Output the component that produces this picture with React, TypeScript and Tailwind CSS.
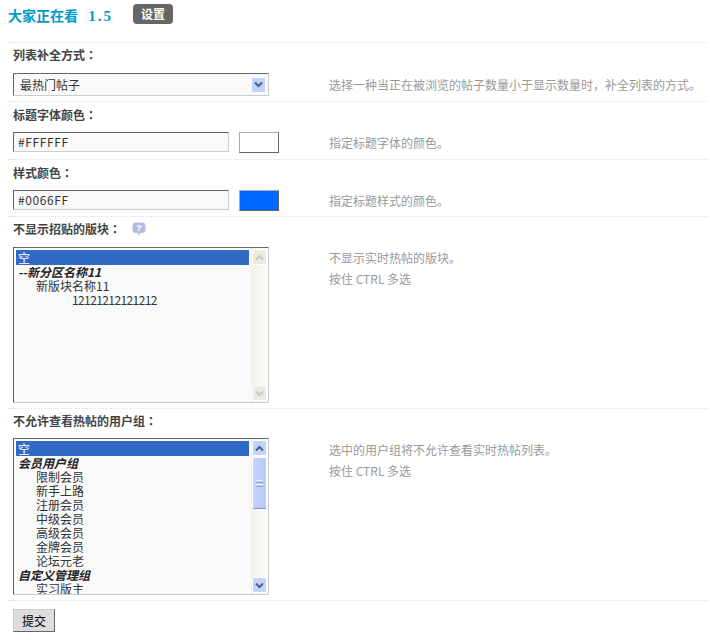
import type { ReactNode } from 'react';

const font = 'font-["Noto_Sans_CJK_SC","Noto_Sans",sans-serif]';

// the reference's colon sits in the middle of its cell, as in the TC cut
function Colon() {
    return <span className='font-["Noto_Sans_CJK_TC",sans-serif]'>：</span>;
}

function Chevron({ up, color }: { up?: boolean; color: string }) {
    return (
        <svg width="9" height="7" viewBox="0 0 9 7" fill="none">
            <path d={up ? 'M1 5.5 L4.5 2 L8 5.5' : 'M1 1.5 L4.5 5 L8 1.5'} stroke={color} strokeWidth="2" />
        </svg>
    );
}

function ArrowBtn({ up, active }: { up?: boolean; active: boolean }) {
    return (
        <div
            className={
                active
                    ? 'flex h-[16px] w-[15px] shrink-0 items-center justify-center rounded-[2px] border border-white bg-[#c1d2fb]'
                    : 'flex h-[16px] w-[15px] shrink-0 items-center justify-center rounded-[2px] border border-white bg-[#ecebe1]'
            }
        >
            <Chevron up={up} color={active ? '#4d6185' : '#c9c8bd'} />
        </div>
    );
}

function Scrollbar({ active }: { active: boolean }) {
    return (
        <div className="flex w-[17px] shrink-0 flex-col items-center bg-gradient-to-r from-[#f1f0e8] to-[#fdfdfa] pt-px pb-px">
            <ArrowBtn up active={active} />
            {active && (
                <div className="mt-px flex h-[52px] w-[15px] flex-col items-center justify-center gap-px rounded-[2px] border border-white border-b-[#7f9db9] bg-gradient-to-r from-[#c4d5fc] to-[#b6c9f8]">
                    <div className="h-px w-[7px] bg-[#eef3ff]" />
                    <div className="h-px w-[7px] bg-[#8fa8e0]" />
                    <div className="h-px w-[7px] bg-[#eef3ff]" />
                    <div className="h-px w-[7px] bg-[#8fa8e0]" />
                </div>
            )}
            <div className="flex-1" />
            <ArrowBtn active={active} />
        </div>
    );
}

function Listbox({ children, active, height }: { children: ReactNode; active: boolean; height: string }) {
    return (
        <div className={`flex w-[256px] overflow-hidden border border-t-[#666666] border-l-[#666666] border-r-[#cccccc] border-b-[#cccccc] bg-[#f9f9f9] ${height}`}>
            <div className="min-w-0 flex-1 overflow-hidden pt-[2px] pl-[2px] text-[12px] leading-[14px] text-[#333333]">
                <div className="mr-[2px] h-[15px] bg-[#316ac5] pl-[2px] leading-[15px] text-white">空</div>
                {children}
            </div>
            <Scrollbar active={active} />
        </div>
    );
}

function Group({ children }: { children: ReactNode }) {
    return <div className="pl-[2px] font-bold italic text-[#222222]">{children}</div>;
}

function Row({ label, hint, control, rowClass, gapClass, hintClass }: {
    label: ReactNode;
    hint: ReactNode;
    control: ReactNode;
    rowClass: string;
    gapClass: string;
    hintClass: string;
}) {
    return (
        <div className={`border-b border-dotted border-[#c4e6fb] px-[5px] ${rowClass}`}>
            <div className="flex h-[16px] items-center text-[12px] font-bold text-[#444444]">{label}</div>
            <div className={`flex ${gapClass}`}>
                <div className="w-[316px] shrink-0">{control}</div>
                <div className={`text-[12px] leading-[21px] text-[#999999] ${hintClass}`}>{hint}</div>
            </div>
        </div>
    );
}

function ColorInput({ value, swatch }: { value: string; swatch: string }) {
    return (
        <div className="flex items-start">
            <div className="flex h-[20px] w-[216px] items-center border border-t-[#666666] border-l-[#666666] border-r-[#cccccc] border-b-[#cccccc] bg-[#f9f9f9] pl-[4px] text-[12px] tracking-[0.6px] text-[#333333]">
                {value}
            </div>
            <div className={`ml-[10px] h-[21px] w-[40px] border border-t-[#aaaaaa] border-l-[#aaaaaa] border-r-[#666666] border-b-[#666666] ${swatch}`} />
        </div>
    );
}

export default function App() {
    return (
        <div className={`h-[640px] w-[710px] overflow-hidden bg-white pr-[2px] pl-[8px] ${font}`}>
            <div className="h-[43px] border-b border-dotted border-[#c4e6fb]">
                <div className="flex items-start pt-[4px]">
                    <h1 className="mt-[1px] w-[125px] text-[14px] leading-[20px] font-bold text-[#0099cc]">
                        大家正在看 <span className='ml-[7px] font-["Liberation_Serif",serif] text-[15px] tracking-[2px]'>1.5</span>
                    </h1>
                    <span className="flex h-[20px] w-[40px] items-center justify-center rounded-[4px] bg-[#666666] text-[12px] font-bold text-white">设置</span>
                </div>
            </div>

            <Row
                label={<>列表补全方式<Colon /></>}
                rowClass="h-[59px] pt-[4px]"
                gapClass="mt-[10px]"
                hintClass="mt-[1px]"
                hint="选择一种当正在被浏览的帖子数量小于显示数量时，补全列表的方式。"
                control={
                    <div className="flex h-[23px] w-[256px] items-center justify-between border border-t-[#666666] border-l-[#666666] border-r-[#cccccc] border-b-[#cccccc] bg-[#f9f9f9] pr-[2px] pl-[6px] text-[12px] text-[#333333]">
                        最热门帖子
                        <ArrowBtn active />
                    </div>
                }
            />
            <Row
                label={<>标题字体颜色<Colon /></>}
                rowClass="h-[58px] pt-[5px]"
                gapClass="mt-[9px]"
                hintClass="mt-0"
                hint="指定标题字体的颜色。"
                control={<ColorInput value="#FFFFFF" swatch="bg-white" />}
            />
            <Row
                label={<>样式颜色<Colon /></>}
                rowClass="h-[57px] pt-[5px]"
                gapClass="mt-[9px]"
                hintClass="mt-0"
                hint="指定标题样式的颜色。"
                control={<ColorInput value="#0066FF" swatch="bg-[#0066ff]" />}
            />
            <Row
                label={
                    <>
                        不显示招贴的版块<Colon />
                        <svg className="ml-[11px]" width="14" height="14" viewBox="0 0 14 14">
                            <path d="M4 0.5 H10 Q13.5 0.5 13.5 4 V7.5 Q13.5 11 10 11 H8.5 L6.5 13.5 L5.5 11 H4 Q0.5 11 0.5 7.5 V4 Q0.5 0.5 4 0.5 Z" fill="#b3bce4" />
                            <text x="7" y="9" textAnchor="middle" fontSize="9" fontWeight="bold" fill="#ffffff" fontFamily="Liberation Sans">?</text>
                        </svg>
                    </>
                }
                rowClass="h-[192px] pt-[4px]"
                gapClass="mt-[10px]"
                hintClass="mt-0"
                hint={<>不显示实时热帖的版块。<br />按住 CTRL 多选</>}
                control={
                    <Listbox active={false} height="h-[156px]">
                        <Group>--新分区名称11</Group>
                        <div className="pl-[20px]">新版块名称11</div>
                        <div className="pl-[56px] tracking-[-0.6px]">12121212121212</div>
                    </Listbox>
                }
            />
            <Row
                label={<>不允许查看热帖的用户组<Colon /></>}
                rowClass="h-[192px] pt-[4px]"
                gapClass="mt-[9px]"
                hintClass="mt-[1px]"
                hint={<>选中的用户组将不允许查看实时热帖列表。<br />按住 CTRL 多选</>}
                control={
                    <Listbox active height="h-[157px]">
                        <Group>会员用户组</Group>
                        {['限制会员', '新手上路', '注册会员', '中级会员', '高级会员', '金牌会员', '论坛元老'].map(name => (
                            <div key={name} className="pl-[20px]">{name}</div>
                        ))}
                        <Group>自定义管理组</Group>
                        <div className="pl-[20px]">实习版主</div>
                    </Listbox>
                }
            />
            <div className="px-[5px] pt-[8px]">
                <button className="flex h-[23px] w-[42px] items-center justify-center border border-t-[#cccccc] border-l-[#cccccc] border-r-[#666666] border-b-[#666666] bg-[#dddddd] text-[12px] text-black">
                    提交
                </button>
            </div>
        </div>
    );
}
